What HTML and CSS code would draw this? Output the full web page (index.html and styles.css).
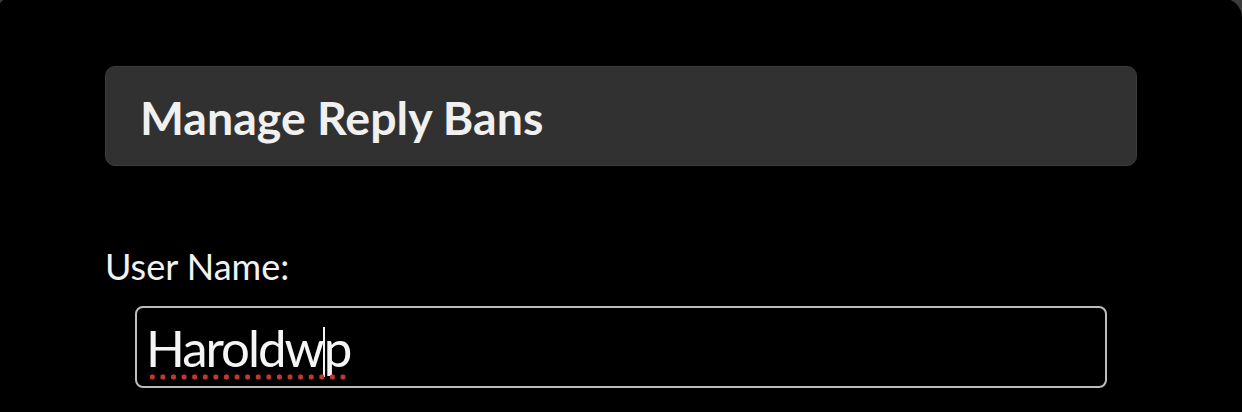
FILE: index.html
```html
<!DOCTYPE html>
<html lang="en">
<head>
<meta charset="utf-8">
<title>Manage Reply Bans</title>
<link rel="stylesheet" href="styles.css">
</head>
<body>
  <div class="sheet">
    <div class="title-bar">
      <h1 class="title">Manage Reply Bans</h1>
    </div>
    <form class="ban-form">
      <label class="field-label" for="user-name">User Name:</label>
      <div class="text-field" id="user-name">
        <span class="typed">Haroldw<span class="caret"></span>p</span>
      </div>
    </form>
  </div>
</body>
</html>
```
FILE: styles.css
```css
html, body {
  margin: 0;
  padding: 0;
  width: 1242px;
  height: 412px;
  overflow: hidden;
  background: #3a3a3a;
}

.sheet {
  box-sizing: border-box;
  width: 1244px;
  height: 416px;
  margin: -2px 0 0 -2px;
  background: #000;
  border-radius: 12px 20px 0 0;
  padding: 68px 0 0 107px;
  font-family: "Lato", "Liberation Sans", sans-serif;
  color: #f2f2f2;
}

.title-bar {
  box-sizing: border-box;
  width: 1032px;
  height: 100px;
  background: #313131;
  border: 1px solid #3d3d3d;
  border-radius: 10px;
  display: flex;
  align-items: center;
  padding: 2px 0 0 34px;
}

.title {
  margin: 0;
  font-size: 46.5px;
  font-weight: 700;
  color: #f0f0f0;
}

.ban-form {
  display: flex;
  flex-direction: column;
  margin-top: 78px;
}

.field-label {
  font-size: 36px;
  font-weight: 400;
  line-height: 44px;
  color: #f2f2f2;
}

.text-field {
  box-sizing: border-box;
  width: 972px;
  height: 82px;
  margin: 18px 0 0 30px;
  border: 2px solid #bdbdbd;
  border-radius: 8px;
  display: flex;
  align-items: center;
  padding: 2px 0 0 9px;
}

.typed {
  position: relative;
  font-size: 51px;
  font-weight: 400;
  letter-spacing: -2px;
  line-height: 60px;
  color: #f5f5f5;
  white-space: pre;
}

/* dotted spelling underline */
.typed::after {
  content: "";
  position: absolute;
  left: 1px;
  right: 0;
  bottom: -2px;
  height: 6px;
  background-image: radial-gradient(circle, #c0392b 2.4px, transparent 2.8px);
  background-size: 10.6px 6px;
  background-repeat: repeat-x;
}

.caret {
  display: inline-block;
  width: 2px;
  height: 50px;
  margin: 0 -1px 0 0;
  vertical-align: -10px;
  background: #f5f5f5;
}
```
